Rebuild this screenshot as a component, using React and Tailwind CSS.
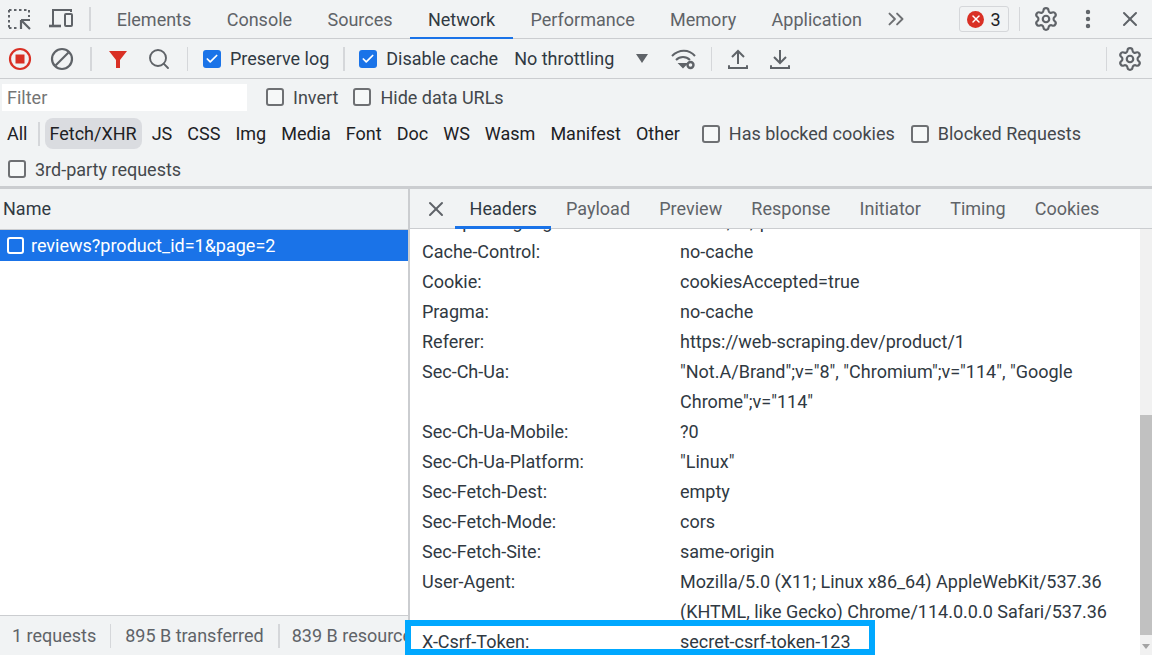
import React from 'react';
import { X, Search, Settings, MoreVertical, ChevronsRight, Check } from 'lucide-react';

const mainTabs = ['Elements', 'Console', 'Sources', 'Network', 'Performance', 'Memory', 'Application'];
const typeFilters = ['JS', 'CSS', 'Img', 'Media', 'Font', 'Doc', 'WS', 'Wasm', 'Manifest', 'Other'];
const detailTabs = ['Headers', 'Payload', 'Preview', 'Response', 'Initiator', 'Timing', 'Cookies'];

const headers = [
  ['Accept-Language:', 'en-US,en;q=0.9'],
  ['Cache-Control:', 'no-cache'],
  ['Cookie:', 'cookiesAccepted=true'],
  ['Pragma:', 'no-cache'],
  ['Referer:', 'https://web-scraping.dev/product/1'],
  ['Sec-Ch-Ua:', '"Not.A/Brand";v="8", "Chromium";v="114", "Google Chrome";v="114"'],
  ['Sec-Ch-Ua-Mobile:', '?0'],
  ['Sec-Ch-Ua-Platform:', '"Linux"'],
  ['Sec-Fetch-Dest:', 'empty'],
  ['Sec-Fetch-Mode:', 'cors'],
  ['Sec-Fetch-Site:', 'same-origin'],
  ['User-Agent:', 'Mozilla/5.0 (X11; Linux x86_64) AppleWebKit/537.36 (KHTML, like Gecko) Chrome/114.0.0.0 Safari/537.36'],
  ['X-Csrf-Token:', 'secret-csrf-token-123'],
];

function Divider({ className = 'h-6 mx-3' }) {
  return <div className={`w-0.5 bg-[#d5d7da] shrink-0 ${className}`} />;
}

function Box({ label, checked, className = '' }) {
  return (
    <label className={`flex items-center gap-[9px] ${className}`}>
      {checked ? (
        <span className="w-[18px] h-[18px] rounded-[3px] bg-[#1a73e8] flex items-center justify-center">
          <Check size={14} strokeWidth={3} className="text-white" />
        </span>
      ) : (
        <span className="w-[18px] h-[18px] rounded-[3px] border-2 border-[#6e7073] bg-white/40" />
      )}
      <span className="whitespace-nowrap">{label}</span>
    </label>
  );
}

function Gear() {
  return <Settings size={26} strokeWidth={2} className="text-[#5f6368]" />;
}

export default function App() {
  return (
    <div
      className="relative w-[1152px] h-[655px] overflow-hidden bg-white text-[18px] text-[#303942] flex flex-col"
      style={{ fontFamily: 'Roboto, "Liberation Sans", sans-serif' }}
    >
      {/* main tab strip */}
      <div className="h-[39px] shrink-0 flex items-center bg-[#f1f3f4] border-b border-[#cbcdd0] text-[#5f6368]">
        <svg width="26" height="26" viewBox="0 0 26 26" className="ml-[7px] shrink-0" fill="none" stroke="#5f6368" strokeWidth="2">
          <path d="M2 4h20M2 4v18M2 22h9M22 4v7" strokeDasharray="2.5 2.5" />
          <path d="M14 14h9M14 14v9M14 14l9 9" strokeWidth="2.2" />
        </svg>
        <svg width="26" height="24" viewBox="0 0 26 24" className="ml-[16px] shrink-0" fill="none" stroke="#5f6368" strokeWidth="2">
          <path d="M4 18V3h18v2" />
          <path d="M0 19h12" strokeWidth="2.6" />
          <rect x="16" y="7" width="7" height="12" rx="1" />
        </svg>
        <Divider className="h-6 ml-[14px] mr-[8px]" />
        <div className="flex h-full">
          {mainTabs.map((t) => (
            <div
              key={t}
              className={`px-[17.7px] flex items-center relative ${t === 'Network' ? 'text-[#303942]' : ''}`}
            >
              {t}
              {t === 'Network' && <div className="absolute left-0 right-0 bottom-[-1px] h-0.5 bg-[#1a73e8]" />}
            </div>
          ))}
        </div>
        <ChevronsRight size={26} strokeWidth={1.8} className="ml-[3px] text-[#6e7073]" />
        <div className="ml-auto flex items-center">
          <div className="h-[26px] w-[50px] border border-[#d5d7da] rounded-[3px] flex items-center justify-center gap-[6px] text-[#202124]">
            <span className="w-[17px] h-[17px] rounded-full bg-[#d93025] flex items-center justify-center">
              <X size={12} strokeWidth={3} className="text-white" />
            </span>
            3
          </div>
          <Divider className="h-6 ml-[10px] mr-[13px] w-px" />
          <Gear />
          <MoreVertical size={24} strokeWidth={2.4} className="ml-[17px] text-[#5f6368]" />
          <X size={24} strokeWidth={2} className="ml-[18px] mr-[10px] text-[#5f6368]" />
        </div>
      </div>

      {/* network toolbar */}
      <div className="h-[40px] shrink-0 flex items-center bg-[#f1f3f4] border-b border-[#cbcdd0]">
        <svg width="24" height="24" viewBox="0 0 24 24" className="ml-[8px] shrink-0" fill="none">
          <circle cx="12" cy="12" r="10" stroke="#d93025" strokeWidth="2.2" />
          <rect x="7.5" y="7.5" width="9" height="9" fill="#d93025" />
        </svg>
        <svg width="24" height="24" viewBox="0 0 24 24" className="ml-[18px] shrink-0" fill="none" stroke="#5f6368" strokeWidth="2.2">
          <circle cx="12" cy="12" r="10" />
          <path d="M5.5 18.5l13-13" />
        </svg>
        <Divider className="h-6 ml-[16px] mr-[16px]" />
        <svg width="20" height="20" viewBox="0 0 20 20" className="shrink-0">
          <path d="M1 2h18l-7 9v8h-4v-8z" fill="#d93025" />
        </svg>
        <Search size={24} strokeWidth={1.9} className="ml-[19px] text-[#5f6368]" />
        <Divider className="h-6 w-px ml-[16px] mr-[15px]" />
        <Box label="Preserve log" checked />
        <Divider className="h-6 mx-[14px]" />
        <Box label="Disable cache" checked />
        <span className="ml-[16px] whitespace-nowrap">No throttling</span>
        <svg width="12" height="10" viewBox="0 0 12 10" className="ml-[22px] shrink-0">
          <path d="M0 0h12L6 9z" fill="#5f6368" />
        </svg>
        <svg width="26" height="24" viewBox="0 0 26 24" className="ml-[23px] shrink-0" fill="none" stroke="#5f6368" strokeWidth="2">
          <path d="M1 9c7-7 17-7 23 0M5 13c4-4 10-4 14 0" />
          <path d="M9 17l3 3 3-3z" fill="#5f6368" />
          <circle cx="19.5" cy="18" r="3" strokeWidth="2.4" />
        </svg>
        <Divider className="h-6 w-px ml-[14px] mr-[14px]" />
        <svg width="24" height="24" viewBox="0 0 24 24" className="shrink-0" fill="none" stroke="#5f6368" strokeWidth="2">
          <path d="M12 17V4M6 10l6-6 6 6" />
          <path d="M3 19v2h18v-2" strokeLinecap="round" />
        </svg>
        <svg width="24" height="24" viewBox="0 0 24 24" className="ml-[18px] shrink-0" fill="none" stroke="#5f6368" strokeWidth="2">
          <path d="M12 3v13M6 10l6 6 6-6" />
          <path d="M3 19v2h18v-2" strokeLinecap="round" />
        </svg>
        <div className="ml-auto flex items-center">
          <Divider className="h-6 w-px mr-[10px]" />
          <Gear />
          <div className="w-[9px]" />
        </div>
      </div>

      {/* filter rows */}
      <div className="h-[36px] shrink-0 flex items-center bg-[#f1f3f4] text-[#44484c]">
        <div className="ml-[2px] w-[245px] h-[27px] bg-white flex items-center pl-[5px] pt-px text-[#757575]">Filter</div>
        <Box label="Invert" className="ml-[19px]" />
        <Box label="Hide data URLs" className="ml-[15px]" />
      </div>
      <div className="h-[37px] shrink-0 flex items-center bg-[#f1f3f4] text-[#202124]">
        <span className="ml-[7px]">All</span>
        <Divider className="h-[24px] ml-[10px] mr-[5px]" />
        <span className="h-[31px] px-[5px] rounded-[8px] bg-[#dadce0] flex items-center">Fetch/XHR</span>
        <div className="flex gap-[15px] ml-[10px]">
          {typeFilters.map((t) => (
            <span key={t}>{t}</span>
          ))}
        </div>
        <Box label="Has blocked cookies" className="ml-[22px] text-[#44484c]" />
        <Box label="Blocked Requests" className="ml-[16px] text-[#44484c]" />
      </div>
      <div className="h-[37px] shrink-0 flex items-center bg-[#f1f3f4] border-b-[3px] border-[#cbcdd0] text-[#44484c]">
        <Box label="3rd-party requests" className="ml-[8px]" />
      </div>

      {/* split view */}
      <div className="flex-1 min-h-0 flex">
        <div className="w-[408px] shrink-0 flex flex-col bg-white">
          <div className="h-[41px] shrink-0 flex items-center pl-[3px] pb-[2px] bg-[#f1f3f4] border-b border-[#cbcdd0] text-[#303942]">Name</div>
          <div className="h-[31px] shrink-0 flex items-center bg-[#1a73e8] text-white pl-[7px] gap-[7px]">
            <span className="w-[17px] h-[17px] rounded-[3px] border-2 border-white" />
            reviews?product_id=1&amp;page=2
          </div>
          <div className="flex-1" />
          <div className="h-[40px] shrink-0 flex items-center bg-[#f1f3f4] border-t border-[#cbcdd0] text-[#5f6368] overflow-hidden whitespace-nowrap">
            <span className="ml-[12px]">1 requests</span>
            <Divider className="h-6 w-px ml-[14px] mr-[14px]" />
            <span>895 B transferred</span>
            <Divider className="h-6 ml-[14px] mr-[12px]" />
            <span>839 B resources</span>
          </div>
        </div>
        <div className="w-0.5 shrink-0 bg-[#cbcdd0]" />
        <div className="flex-1 min-w-0 flex flex-col">
          <div className="h-[40px] shrink-0 flex items-center bg-[#f1f3f4] border-b border-[#cbcdd0] text-[#5f6368]">
            <X size={24} strokeWidth={2} className="ml-[14px] text-[#5f6368]" />
            <div className="flex h-full ml-[7px]">
              {detailTabs.map((t) => (
                <div key={t} className={`px-[14.6px] flex items-center relative ${t === 'Headers' ? 'text-[#303942]' : ''}`}>
                  {t}
                  {t === 'Headers' && <div className="absolute left-0 right-0 bottom-[-1px] h-[3px] bg-[#1a73e8]" />}
                </div>
              ))}
            </div>
          </div>
          <div className="flex-1 min-h-0 flex overflow-hidden">
            {/* first row is scrolled mostly out of view */}
            <div className="flex-1 min-w-0 pl-[12px] -mt-[22px] leading-[30px]">
              {headers.map(([k, v]) => (
                <div key={k} className="flex">
                  <div className="w-[258px] shrink-0">{k}</div>
                  <div className="flex-1 min-w-0 pr-[20px]">{v}</div>
                </div>
              ))}
            </div>
            <div className="w-[12px] shrink-0 bg-[#f1f1f1] flex flex-col">
              <div className="h-[186px] shrink-0" />
              <div className="h-[220px] shrink-0 bg-[#c1c1c1]" />
              <div className="flex-1 flex items-end justify-center pb-[6px]">
                <svg width="8" height="5" viewBox="0 0 8 5"><path d="M0 0h8L4 5z" fill="#a3a3a3" /></svg>
              </div>
            </div>
          </div>
        </div>
      </div>

      {/* annotation over the token row */}
      <div className="absolute left-[405px] top-[620px] w-[470px] h-[35px] border-[6px] border-[#00a8ff] pointer-events-none" />
    </div>
  );
}
